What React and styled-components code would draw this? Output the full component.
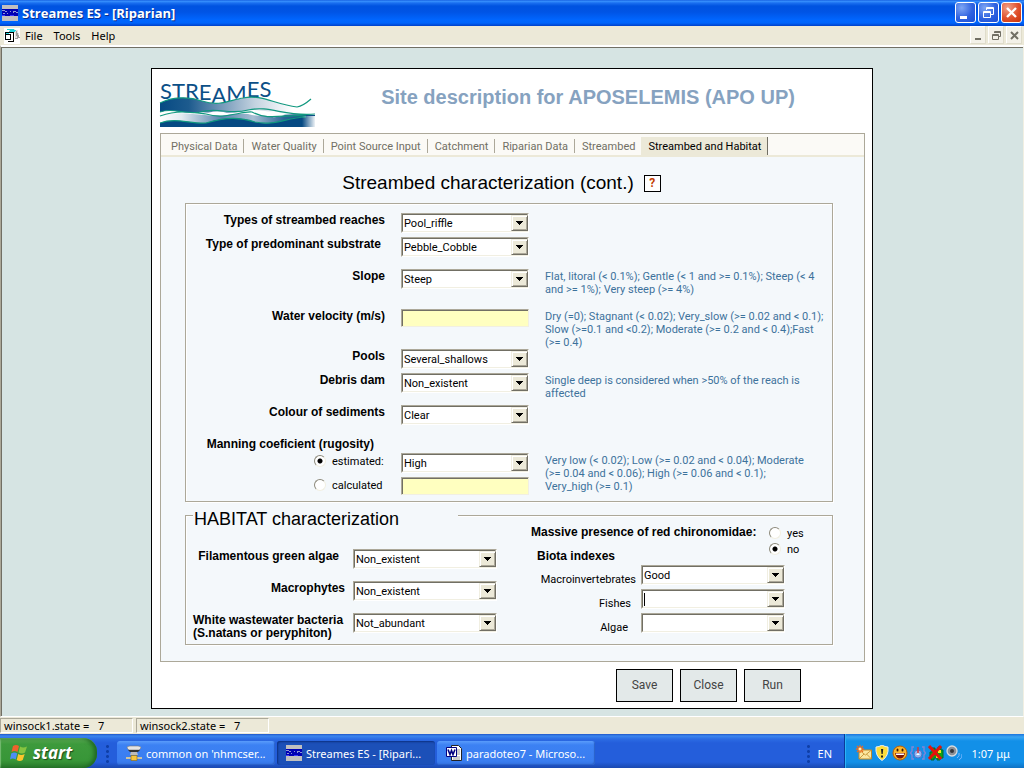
import React from 'react';
import styled, { createGlobalStyle } from 'styled-components';

const TABS = [
  'Physical Data',
  'Water Quality',
  'Point Source Input',
  'Catchment',
  'Riparian Data',
  'Streambed',
  'Streambed and Habitat',
];

export default function App() {
  return (
    <>
      <GlobalStyle />
      <Desktop>
        <TitleBar />
        <MenuBar />
        <Workspace>
          <Form>
            <FormHeader>
              <Logo />
              <h1>Site description for APOSELEMIS (APO UP)</h1>
            </FormHeader>
            <Panel>
              <Tabs>
                {TABS.map((tab, i) => (
                  <Tab
                    key={tab}
                    type="button"
                    $active={i === TABS.length - 1}
                    $divider={i < TABS.length - 2}
                  >
                    {tab}
                  </Tab>
                ))}
              </Tabs>
              <SectionTitle>
                <h2>Streambed characterization (cont.)</h2>
                <HelpButton type="button">?</HelpButton>
              </SectionTitle>
              <Streambed />
              <Habitat />
            </Panel>
            <Actions>
              <button type="button">Save</button>
              <button type="button">Close</button>
              <button type="button">Run</button>
            </Actions>
          </Form>
        </Workspace>
        <StatusBar>
          <span>winsock1.state =   7</span>
          <span>winsock2.state =   7</span>
        </StatusBar>
        <Taskbar />
      </Desktop>
    </>
  );
}

function TitleBar() {
  return (
    <Title>
      <StreamesIcon />
      <strong>Streames ES - [Riparian]</strong>
      <WindowButton type="button" aria-label="Minimize">
        <svg width="19" height="19"><path d="M4 13h7v3h-7z" fill="#fff" /></svg>
      </WindowButton>
      <WindowButton type="button" aria-label="Restore">
        <svg width="19" height="19" fill="none" stroke="#fff">
          <path d="M7.500 7V4.500H14.500V11.500H12M7 5.500H15" />
          <path d="M4.500 8.500H11.500V14.500H4.500ZM4 9.500H12" />
        </svg>
      </WindowButton>
      <WindowButton type="button" aria-label="Close" $close>
        <svg width="19" height="19"><path d="M5 5l9 9M14 5l-9 9" stroke="#fff" strokeWidth="2.400" /></svg>
      </WindowButton>
    </Title>
  );
}

function MenuBar() {
  return (
    <Menu>
      <svg width="16" height="16" viewBox="0 0 16 16" shapeRendering="crispEdges">
        <rect width="16" height="16" fill="#fff" />
        <path d="M5 1h6v1h3v3h1v5h-4V5H5z" fill="#e2e2e2" />
        <path d="M3 1h7v1H3zM5 3h6v1h-6zM6 2h6v1h-6z" fill="#25d5dd" />
        <path d="M12 3h1v2h1v2h1v2h1v1h-2v1h-3v-1h2V8h-1z" fill="#a0a0a0" />
        <path d="M1 4h4v1H2v1h5v1H2v4h4V7h1v5H1zM5 4h5v10H4v-1h5V5H5z" fill="#000" />
        <path d="M2 5h3v1H2z" fill="#25d5dd" />
      </svg>
      <nav>
        <button type="button">File</button>
        <button type="button">Tools</button>
        <button type="button">Help</button>
      </nav>
      <ChildButton type="button" aria-label="Minimize form">
        <svg width="15" height="15"><path d="M4 10h6v2h-6z" fill="#716f64" /></svg>
      </ChildButton>
      <ChildButton type="button" aria-label="Restore form">
        <svg width="15" height="15" fill="none" stroke="#716f64">
          <path d="M5.500 5V3.500H11.500V8.500H10M5 4.500H12" />
          <path d="M3.500 6.500H9.500V11.500H3.500ZM3 7.500H10" />
        </svg>
      </ChildButton>
      <ChildButton type="button" aria-label="Close form">
        <svg width="15" height="15"><path d="M4 4l7 7M11 4l-7 7" stroke="#716f64" strokeWidth="2" /></svg>
      </ChildButton>
    </Menu>
  );
}

function Combo({ id, value = '', caret }) {
  return (
    <ComboBox>
      <select id={id} defaultValue={value}>
        <option>{value}</option>
      </select>
      {caret && <Caret />}
      <ComboArrow>
        <svg width="7" height="4" shapeRendering="crispEdges">
          <path d="M0 0h7v1h-1v1h-1v1h-1v1h-1v-1h-1v-1h-1v-1h-1z" />
        </svg>
      </ComboArrow>
    </ComboBox>
  );
}

function Streambed() {
  return (
    <Group>
      <Row>
        <Label htmlFor="reaches">Types of streambed reaches</Label>
        <Combo id="reaches" value="Pool_riffle" />
      </Row>
      <Row $size="medium">
        <Label htmlFor="substrate" $indent="4px">Type of predominant substrate</Label>
        <Combo id="substrate" value="Pebble_Cobble" />
      </Row>
      <Row $size="large">
        <Label htmlFor="slope">Slope</Label>
        <Combo id="slope" value="Steep" />
        <Hint>Flat, litoral (&lt; 0.1%); Gentle (&lt; 1 and &gt;= 0.1%); Steep (&lt; 4<br />and &gt;= 1%); Very steep (&gt;= 4%)</Hint>
      </Row>
      <Row $size="large">
        <Label htmlFor="velocity">Water velocity (m/s)</Label>
        <TextBox id="velocity" />
        <Hint>
          Dry (=0); Stagnant (&lt; 0.02); Very_slow (&gt;= 0.02 and &lt; 0.1);<br />
          Slow (&gt;=0.1 and &lt;0.2); Moderate (&gt;= 0.2 and &lt; 0.4);Fast<br />
          (&gt;= 0.4)
        </Hint>
      </Row>
      <Row>
        <Label htmlFor="pools">Pools</Label>
        <Combo id="pools" value="Several_shallows" />
      </Row>
      <Row $size="medium">
        <Label htmlFor="debris">Debris dam</Label>
        <Combo id="debris" value="Non_existent" />
        <Hint>Single deep is considered when &gt;50% of the reach is<br />affected</Hint>
      </Row>
      <Row $size="medium">
        <Label htmlFor="colour">Colour of sediments</Label>
        <Combo id="colour" value="Clear" />
      </Row>
      <Row $size="small">
        <Label as="span" $indent="11px">Manning coeficient (rugosity)</Label>
      </Row>
      <Row>
        <Option $indent>
          <input type="radio" name="manning" defaultChecked />
          estimated:
        </Option>
        <Combo id="manning-estimated" value="High" />
        <Hint>
          Very low (&lt; 0.02); Low (&gt;= 0.02 and &lt; 0.04); Moderate<br />
          (&gt;= 0.04 and &lt; 0.06); High (&gt;= 0.06 and &lt; 0.1);<br />
          Very_high (&gt;= 0.1)
        </Hint>
      </Row>
      <Row>
        <Option $indent>
          <input type="radio" name="manning" />
          calculated
        </Option>
        <TextBox aria-label="calculated coeficient" />
      </Row>
    </Group>
  );
}

function Habitat() {
  return (
    <HabitatGroup>
      <legend>HABITAT characterization</legend>
      <HabitatColumns>
        <AlgaeFields>
          <Label htmlFor="filamentous" $indent="6px">Filamentous green algae</Label>
          <Combo id="filamentous" value="Non_existent" />
          <Label htmlFor="macrophytes">Macrophytes</Label>
          <Combo id="macrophytes" value="Non_existent" />
          <Label htmlFor="bacteria" $left>White wastewater bacteria<br />(S.natans or peryphiton)</Label>
          <Combo id="bacteria" value="Not_abundant" />
        </AlgaeFields>
        <div>
          <Chironomidae>
            <div>
              <Label as="p" $left>Massive presence of red chironomidae:</Label>
              <Label as="p" $left $start="6px">Biota indexes</Label>
            </div>
            <div>
              <Option><input type="radio" name="chironomidae" />yes</Option>
              <Option><input type="radio" name="chironomidae" defaultChecked />no</Option>
            </div>
          </Chironomidae>
          <BiotaRow>
            <BiotaLabel htmlFor="macroinvertebrates">Macroinvertebrates</BiotaLabel>
            <Combo id="macroinvertebrates" value="Good" />
          </BiotaRow>
          <BiotaRow>
            <BiotaLabel htmlFor="fishes" $indent="5px">Fishes</BiotaLabel>
            <Combo id="fishes" caret />
          </BiotaRow>
          <BiotaRow>
            <BiotaLabel htmlFor="algae" $indent="8px">Algae</BiotaLabel>
            <Combo id="algae" />
          </BiotaRow>
        </div>
      </HabitatColumns>
    </HabitatGroup>
  );
}

function Taskbar() {
  return (
    <Bar>
      <StartButton type="button">
        <svg width="20" height="18" viewBox="0 0 20 18">
          <path d="M3 2q3-2 6 0l-1.500 6q-3-2-6 0z" fill="#f0622d" />
          <path d="M10 2.500q3 2 7 0l-2 6q-3 2-6.500 0z" fill="#86c440" />
          <path d="M1.200 9.500q3-2 6 0l-1.500 6q-3-2-5.700 0z" fill="#4d8ef5" />
          <path d="M8.200 10q3 2 6.500 0l-2 6q-3 2-6 0z" fill="#fbc52c" />
        </svg>
        start
      </StartButton>
      <Grip />
      <TaskButton type="button">
        <svg width="16" height="16" viewBox="0 0 16 16">
          <path d="M1 3q0-2 3-2h8q3 0 3 2l-2 2H3z" fill="#e4e4e4" stroke="#777" strokeWidth=".6" />
          <path d="M2 5h12l-2 2H4z" fill="#333" />
          <path d="M5 7h6l1 3H4z" fill="#bbb" />
          <path d="M0 12h16v2H0z" fill="#c9c3a4" />
          <path d="M5 10.500h6v5H5z" fill="#f6c53e" stroke="#8a6a10" strokeWidth=".6" />
        </svg>
        common on 'nhmcser...
      </TaskButton>
      <TaskButton type="button" $pressed>
        <StreamesIcon />
        Streames ES - [Ripari...
      </TaskButton>
      <TaskButton type="button">
        <svg width="16" height="16" viewBox="0 0 16 16">
          <path d="M5.500.5h7l3 3v12h-10z" fill="#fff" stroke="#222" />
          <path d="M11 5h3M11 7h3M11 9h3M7 12h7M7 14h7" stroke="#999" />
          <path d="M.5 2.500h10v9H.5z" fill="#fff" stroke="#000080" />
          <path d="M2 4.500l2 5 1.500-4 1.500 4 2-5" fill="none" stroke="#000080" strokeWidth="1.600" />
        </svg>
        paradoteo7 - Microso...
      </TaskButton>
      <Language>
        <Grip />
        <span>EN</span>
      </Language>
      <Tray>
        <TrayIcons />
        <time>1:07 μμ</time>
      </Tray>
    </Bar>
  );
}

function StreamesIcon() {
  return (
    <svg width="16" height="16" viewBox="0 0 16 16" shapeRendering="crispEdges">
      <rect width="16" height="16" fill="#c0c0c0" />
      <rect y="4" width="16" height="7" fill="#0000b4" />
      <path d="M0 5h3v1h2v1h-2v-1h-3zM7 6h2v1h2v-1h3v1h-2v1h-1v-1h-2zM1 8h2v1h-2zM5 8h1v1h-1zM14 7h2v1h-2z" fill="#8b95d6" />
      <path d="M0 10h3v1h-3zM8 10h4v1h-4z" fill="#3c3cff" />
    </svg>
  );
}

function Logo() {
  return (
    <svg width="155" height="46" viewBox="0 0 155 46" overflow="visible" role="img" aria-label="STREAMES">
      <defs>
        <linearGradient id="upper">
          <stop offset="0" stopColor="#064a83" />
          <stop offset=".2" stopColor="#1d5b8e" />
          <stop offset=".42" stopColor="#7297b8" />
          <stop offset=".66" stopColor="#c4d3e0" />
          <stop offset=".92" stopColor="#fff" />
        </linearGradient>
        <linearGradient id="lower">
          <stop offset="0" stopColor="#fff" />
          <stop offset=".14" stopColor="#e3eaf1" />
          <stop offset=".4" stopColor="#5583ab" />
          <stop offset=".6" stopColor="#a9bfd3" />
          <stop offset=".8" stopColor="#2b6596" />
          <stop offset="1" stopColor="#0b4b83" />
        </linearGradient>
        <linearGradient id="fade">
          <stop offset="0" stopColor="#fff" stopOpacity="0" />
          <stop offset="1" stopColor="#fff" />
        </linearGradient>
      </defs>
      <LogoLetters x="0" y="18" dy="0 0 0 1 3 -2 -4 0">STREAMES</LogoLetters>
      <path d="M0 22C12 16 28 15 42 20C60 26 70 19 83 17C101 13 114 23 137 26L144 33C120 34 105 28 90 29C70 34 55 32 40 31C25 34 12 27 0 31Z" fill="url(#upper)" />
      <path d="M0 35C18 30 30 33 45 34C60 36 75 32 88 33C105 38 125 31 155 34V46H0Z" fill="url(#lower)" />
      <path d="M0 42C16 36 30 43 46 42C66 36 80 36 95 41C115 46 125 36 155 35V46H0Z" fill="#064a83" />
      <path d="M48 32Q58 28 70 33Q60 37 48 32ZM102 33Q113 27 125 34Q112 39 102 33Z" fill="#fff" />
      <path
        d="M0 22C12 16 28 15 42 20C60 26 70 19 83 17C101 13 114 23 137 26Q143 25 151 18M0 31C14 26 25 34 40 31C57 26 70 34 88 29C110 24 125 36 155 33M0 35C18 29 30 31 46 33C65 39 80 30 92 31C108 40 125 33 146 35M0 42C16 36 30 43 46 42C66 36 80 36 95 41C115 45 125 37 146 36"
        fill="none"
        stroke="#11987f"
        strokeWidth="1.200"
      />
      <rect x="142" y="35" width="14" height="11" fill="url(#fade)" />
    </svg>
  );
}

function TrayIcons() {
  return (
    <>
      <svg width="16" height="16" viewBox="0 0 16 16">
        <path d="M3 5h12.500v9H3z" fill="#fbe7a1" stroke="#c08a28" />
        <path d="M3 5l6.500 5L15.500 5M3 14l5-5M15.500 14l-5-5" fill="none" stroke="#c08a28" strokeWidth=".8" />
        <path d="M4 0v8M0 4h8M1 1l6 6M7 1L1 7" stroke="#ef6a1d" strokeWidth="1.300" />
        <circle cx="4" cy="4" r="1.500" fill="#fff2b0" />
      </svg>
      <svg width="16" height="16" viewBox="0 0 16 16">
        <path d="M8 0q3 2 6 2q1 9-6 13.500Q1 11 2 2q3 0 6-2z" fill="#fbdc3b" stroke="#e9eef5" />
        <path d="M7 4h2.200l-.5 5H7.500zM7 10.500h2v2H7z" fill="#222" />
      </svg>
      <svg width="16" height="16" viewBox="0 0 16 16">
        <circle cx="8" cy="8" r="7" fill="#fbb62c" stroke="#b65c08" />
        <path d="M3 8h10q-1 5.500-5 5.500T3 8z" fill="#7b1508" />
        <path d="M3.800 8.500h8.400l-.4 1.500H4.200z" fill="#fff" />
        <ellipse cx="5.500" cy="5" rx="1" ry="1.500" fill="#3b1903" />
        <ellipse cx="10.500" cy="5" rx="1" ry="1.500" fill="#3b1903" />
      </svg>
      <svg width="16" height="16" viewBox="0 0 16 16" fill="none">
        <path d="M4 2H2v4L.500 8 2 10v4h2M12 2h2v4l1.500 2L14 10v4h-2" stroke="#7d86d8" strokeWidth="1.400" />
        <circle cx="8" cy="9" r="4" fill="#8fb4ee" stroke="#5470c8" />
        <path d="M8 2v6" stroke="#d33" strokeWidth="1.500" />
        <path d="M6 10l2-2 2 2z" fill="#fff" />
      </svg>
      <svg width="16" height="16" viewBox="0 0 16 16">
        <path d="M4 3h3v2h3V2h3v3h2v8h-3v2h-3v-2H6v2H3v-4H2V7h2z" fill="#12a312" stroke="#063" />
        <path d="M10 5h3v3h-3zM8 11h3v2H8z" fill="#f3e520" />
        <path d="M1 1l12 13M13 1L1 14" stroke="#e3120b" strokeWidth="3" />
      </svg>
      <svg width="16" height="16" viewBox="0 0 16 16" fill="none">
        <circle cx="6" cy="6" r="5" fill="#8a8f96" stroke="#d8dce0" strokeWidth="1.300" />
        <circle cx="6" cy="6" r="2" fill="#33363b" />
        <path d="M11 13q3-2 2-5M13 15q4-2 3-6" stroke="#7cb8ff" />
      </svg>
    </>
  );
}

const GlobalStyle = createGlobalStyle`
  *{
    box-sizing: border-box;
  }
  body{
    margin: 0;
    font-family: Roboto, "Liberation Sans", sans-serif;
    font-size: 11px;
    line-height: 13px;
    color: #000;
  }
  h1, h2, p{
    margin: 0;
  }
  h1, h2{
    font-family: "Liberation Sans", Arial, sans-serif;
    line-height: 24px;
  }
  button, input, select{
    font: inherit;
    color: inherit;
    margin: 0;
    padding: 0;
  }
  svg{
    display: block;
    flex: none;
  }
`

const Desktop = styled.div`
  min-height: 100vh;
  display: flex;
  flex-direction: column;
  background: #ece9d8;
`

const Title = styled.header`
  height: 26px;
  display: flex;
  align-items: center;
  gap: 2px;
  padding: 0 2px 1px;
  background: linear-gradient(#0a50d8 0, #3b94ff 1px, #1a6ff0 3px, #0053e0 6px, #0054e5 12px, #0066ff 20px, #0064fb 23px, #0040c8 26px);
  strong{
    flex: 1;
    padding-left: 2px;
    color: #fff;
    font-family: "Open Sans", "Noto Sans", sans-serif;
    font-size: 13px;
    line-height: 18px;
    text-shadow: 1px 1px 0 #0a2f8c;
  }
`

const WindowButton = styled.button`
  width: 21px;
  height: 21px;
  border: 1px solid #fff;
  border-radius: 3px;
  background: ${({ $close }) => $close
    ? 'radial-gradient(circle at 30% 25%, #f0a088, #e0502c 55%, #c8330a)'
    : 'radial-gradient(circle at 30% 25%, #7ea6f4, #2f62e0 55%, #1a4fd6)'};
`

const Menu = styled.div`
  height: 19px;
  display: flex;
  align-items: center;
  gap: 3px;
  padding: 0 2px 0 4px;
  nav{
    flex: 1;
    display: flex;
    gap: 11px;
    padding-left: 2px;
  }
  nav button{
    border: 0;
    background: none;
    font-family: "Noto Sans", sans-serif;
  }
`

const ChildButton = styled.button`
  width: 15px;
  height: 17px;
  border: 0;
  background: #f3f1e8;
  box-shadow: -1px -1px 0 #fff, inset -1px -1px 0 #dfdccb;
`

const Workspace = styled.main`
  flex: 1;
  padding: 21px 2px 6px;
  border: 1px solid #aca899;
  border-top: 2px solid #fff;
  border-right-color: #f1efe2;
  border-bottom: 1px solid #fff;
  background: #d6e4e3;
  box-shadow: inset 1px 1px 0 #716f64;
`

const Form = styled.form`
  max-width: 722px;
  margin: 0 auto;
  padding: 12px 7px 6px 8px;
  border: 1px solid #000;
  background: #fff;
`

const FormHeader = styled.div`
  display: flex;
  margin-bottom: 6px;
  h1{
    flex: 1;
    padding: 4px 4px 0 0;
    text-align: center;
    color: #86a2c0;
    font-size: 20px;
  }
`

const LogoLetters = styled.text`
  fill: #0b4f87;
  font-family: Lato, sans-serif;
  font-size: 22px;
`

const Panel = styled.section`
  padding-bottom: 16px;
  border: 1px solid #aca899;
  background: #f4f8fb;
`

const Tabs = styled.div`
  display: flex;
  align-items: flex-end;
  height: 23px;
  padding: 0 3px;
  border-bottom: 2px solid #ece9d8;
  background: #fbfaf6;
`

const Tab = styled.button`
  height: 14px;
  margin-bottom: 2px;
  padding: 0 6px 0 7px;
  border: 0;
  border-right: ${({ $divider }) => ($divider ? '1px solid #aca899' : '0')};
  background: none;
  color: #716f64;
  ${({ $active }) => $active && `
    height: 18px;
    margin-bottom: 0;
    border-right: 1px solid #716f64;
    background: #ece9d8;
    color: #000;
  `}
`

const SectionTitle = styled.div`
  height: 46px;
  padding: 6px 22px 0 0;
  display: flex;
  align-items: center;
  justify-content: center;
  gap: 10px;
  h2{
    font-size: 19px;
    font-weight: normal;
  }
`

const HelpButton = styled.button`
  width: 17px;
  height: 17px;
  border: 1px solid #000;
  background: #fff;
  color: #c23c00;
  font-weight: bold;
  font-size: 12px;
`

const Group = styled.fieldset`
  min-width: 0;
  margin: 0 31px 0 24px;
  padding: 9px 8px 0 0;
  border: 1px solid #aca899;
  box-shadow: 1px 1px 0 #fff, inset 1px 1px 0 #fff;
`

const ROW_HEIGHTS = { small: '16px', medium: '32px', large: '40px' };

const Row = styled.div`
  display: grid;
  grid-template-columns: 199px 128px 1fr;
  column-gap: 16px;
  align-items: start;
  height: ${({ $size }) => ROW_HEIGHTS[$size] || '24px'};
`

const Label = styled.label`
  padding-top: 1px;
  padding-left: ${({ $start }) => $start || 0};
  padding-right: ${({ $indent }) => $indent || 0};
  text-align: ${({ $left }) => ($left ? 'left' : 'right')};
  font-family: "Liberation Sans", Arial, sans-serif;
  font-size: 12px;
  font-weight: bold;
  white-space: nowrap;
`

const Hint = styled.p`
  padding-top: 1px;
  color: #3d729c;
  white-space: nowrap;
`

const Option = styled.label`
  display: flex;
  align-items: center;
  gap: 6px;
  height: 16px;
  padding-left: ${({ $indent }) => ($indent ? '128px' : 0)};
  input{
    appearance: none;
    width: 12px;
    height: 12px;
    border: 1px solid;
    border-color: #8c897b #f1efe2 #f1efe2 #8c897b;
    border-radius: 50%;
    background: #fff;
  }
  input:checked{
    background: radial-gradient(circle, #000 2px, #fff 3px);
  }
`

const ComboBox = styled.div`
  display: grid;
  height: 20px;
  border: 1px solid;
  border-color: #aca899 #fff #fff #aca899;
  select{
    grid-area: 1 / 1;
    appearance: none;
    min-width: 0;
    width: 100%;
    height: 18px;
    padding: 0 18px 0 1px;
    border: 1px solid;
    border-color: #716f64 #f1efe2 #f1efe2 #716f64;
    border-radius: 0;
    background: #fff;
  }
`

const ComboArrow = styled.span`
  grid-area: 1 / 1;
  place-self: center end;
  display: grid;
  place-items: center;
  width: 17px;
  height: 16px;
  border: 1px solid;
  border-color: #f1efe2 #716f64 #716f64 #f1efe2;
  background: #ece9d8;
  box-shadow: inset 1px 1px 0 #fff, inset -1px -1px 0 #aca899;
  pointer-events: none;
`

const Caret = styled.span`
  grid-area: 1 / 1;
  place-self: center start;
  width: 1px;
  height: 13px;
  margin-left: 2px;
  background: #000;
`

const TextBox = styled.input`
  min-width: 0;
  width: 100%;
  height: 18px;
  border: 1px solid;
  border-color: #aca899 #f1efe2 #f1efe2 #aca899;
  background: #ffffc0;
  box-shadow: inset 1px 1px 0 #716f64;
`

const HabitatGroup = styled(Group)`
  margin-top: 3px;
  padding: 0;
  legend{
    width: 265px;
    margin-left: 7px;
    padding: 8px 0 0 1px;
    font-family: "Liberation Sans", Arial, sans-serif;
    font-size: 18px;
    line-height: 12px;
    background: #f4f8fb;
  }
`

const HabitatColumns = styled.div`
  display: grid;
  grid-template-columns: 311px 254px;
  column-gap: 34px;
`

const AlgaeFields = styled.div`
  display: grid;
  grid-template-columns: 152px 144px;
  gap: 12px 8px;
  align-items: start;
  padding: 24px 0 4px 7px;
`

const Chironomidae = styled.div`
  display: flex;
  justify-content: space-between;
  height: 40px;
  p{
    height: 24px;
  }
  > div:last-child{
    width: 48px;
    margin-right: -32px;
  }
`

const BiotaRow = styled.div`
  display: grid;
  grid-template-columns: 97px 144px;
  column-gap: 5px;
  justify-content: end;
  align-items: start;
  height: 24px;
`

const BiotaLabel = styled.label`
  padding-top: 8px;
  padding-right: ${({ $indent }) => $indent || 0};
  text-align: right;
`

const Actions = styled.div`
  display: flex;
  justify-content: flex-end;
  gap: 7px;
  margin: 7px 64px 0 0;
  button{
    width: 57px;
    height: 33px;
    border: 1px solid #000;
    background: #e3e9e9;
    color: #444;
    font-size: 12px;
  }
`

const StatusBar = styled.footer`
  display: flex;
  gap: 3px;
  height: 17px;
  padding: 1px 0;
  font-family: "Noto Sans", sans-serif;
  span{
    width: 133px;
    padding-left: 3px;
    border: 1px solid;
    border-color: #aca899 #fff #fff #aca899;
    white-space: pre;
  }
`

const Bar = styled.footer`
  display: flex;
  height: 34px;
  background: linear-gradient(#1f55c8 0, #3b86ee 2px, #2c6ce4 5px, #245edb 9px, #245edb 28px, #1a48b0 34px);
  color: #fff;
  font-family: "Noto Sans", sans-serif;
`

const StartButton = styled.button`
  display: flex;
  align-items: center;
  gap: 3px;
  width: 97px;
  margin-top: 4px;
  padding: 0 0 0 10px;
  border: 0;
  border-radius: 0 14px 14px 0;
  background: linear-gradient(#5eac56, #3d9a3c 20%, #389638 75%, #2a7a2c);
  box-shadow: inset -3px 0 4px #1f6722, inset 1px 1px 1px #7cc077;
  font-family: "Open Sans", "Noto Sans", sans-serif;
  font-size: 17px;
  line-height: 24px;
  font-style: italic;
  font-weight: bold;
  text-shadow: 1px 1px 1px #1c4a1c;
`

const Grip = styled.i`
  width: 5px;
  margin: 10px 7px 4px 8px;
  background: radial-gradient(circle, #0f3fa8 1px, transparent 2px) 0 0 / 5px 5px;
`

const TaskButton = styled.button`
  display: flex;
  align-items: center;
  gap: 4px;
  width: 158px;
  height: 24px;
  margin: 7px 2px 0 0;
  padding-left: 9px;
  border: 0;
  border-radius: 3px;
  background: ${({ $pressed }) => ($pressed ? '#1c50b8' : 'linear-gradient(#5a9cfb, #3c81f3 4px, #3a7df0 20px, #3472e0)')};
  box-shadow: ${({ $pressed }) => ($pressed ? 'inset 1px 1px 2px #0c2f80' : 'inset -1px -1px 1px #2b62c8')};
  white-space: nowrap;
`

const Language = styled.div`
  display: flex;
  margin-left: auto;
  span{
    align-self: center;
    margin: 5px 12px 0 0;
  }
`

const Tray = styled.div`
  display: flex;
  align-items: center;
  gap: 2px;
  width: 180px;
  padding: 4px 14px 0 11px;
  border-left: 1px solid #0b3a9a;
  background: linear-gradient(#1b74dd 0, #3aa5f2 3px, #1290e8 7px, #1290e8 28px, #0f72c4 34px);
  box-shadow: inset 1px 0 0 #2cb4f6;
  time{
    margin-left: auto;
    white-space: nowrap;
  }
`
